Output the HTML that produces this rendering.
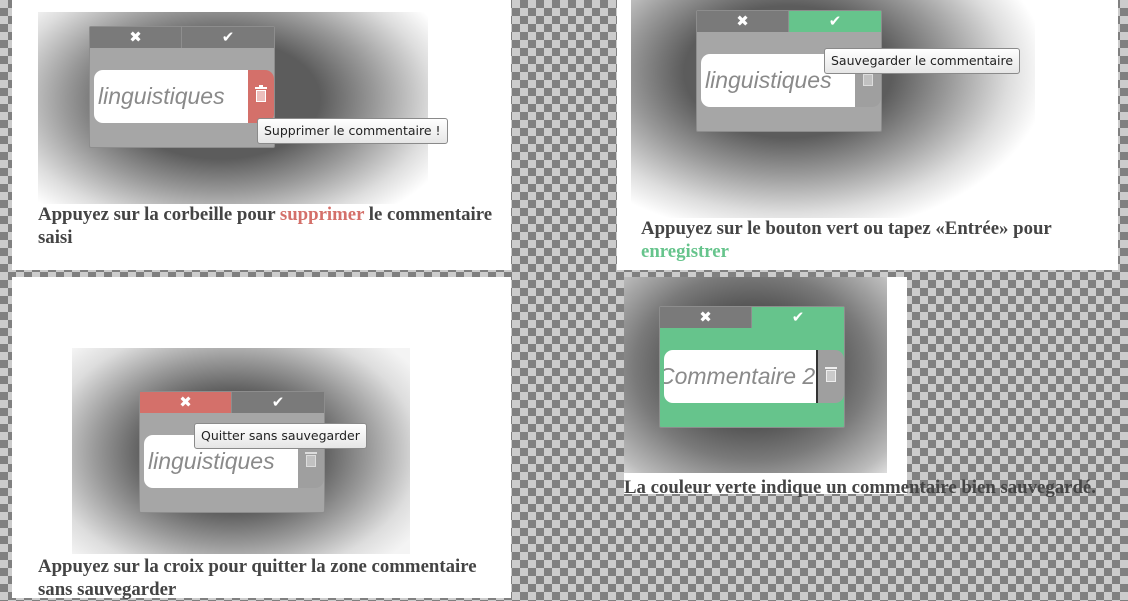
<!DOCTYPE html>
<html><head><meta charset="utf-8">
<style>
*{margin:0;padding:0;box-sizing:border-box}
body{width:1128px;height:598px;overflow:hidden;position:relative;
background-color:#cccccc;
background-image:linear-gradient(45deg,#808080 25%,transparent 25%,transparent 75%,#808080 75%),linear-gradient(45deg,#808080 25%,transparent 25%,transparent 75%,#808080 75%);
background-size:16px 16px;background-position:0 0,8px 8px;
font-family:"Liberation Serif",serif}
.a{position:absolute}
.w{background:#fff}
.img{position:absolute}
.pop{position:absolute;width:186px;height:122px;background:#a6a6a6;border:1px solid #8d8d8d;border-radius:2px}
.hd{position:absolute;top:0;height:21px;width:50%;background:#7a7a7a;color:#fff;font-size:15px;text-align:center;line-height:21px;font-family:"DejaVu Sans",sans-serif;font-weight:bold}
.hd.l{left:0;border-right:1px solid #8e8e8e}.hd.r{right:0}
.inp{position:absolute;left:4px;top:43px;width:154px;height:53px;background:#fff;border-radius:9px 0 0 9px;font-family:"Liberation Sans",sans-serif;font-style:italic;color:#8a8a8a;font-size:23px;line-height:53px;padding-left:4px;overflow:hidden;white-space:nowrap}
.tr{position:absolute;left:158px;top:43px;width:26px;height:53px;border-radius:0 9px 9px 0;background:#9f9f9f}
.tr svg{position:absolute;left:6px;top:14px}
.tip{position:absolute;height:26px;background:linear-gradient(#fff,#e6e6e6);border:1px solid #8a8a8a;border-radius:3px;font-family:"DejaVu Sans","Liberation Sans",sans-serif;font-size:12.5px;color:#222;line-height:24px;padding:0 6px;white-space:nowrap}
.cap{position:absolute;font-weight:bold;font-size:18.8px;color:#444;line-height:23px}
</style></head><body>

<!-- panel 1 -->
<div class="a w" style="left:12px;top:0;width:499px;height:270px"></div>
<div class="img" style="left:38px;top:12px;width:390px;height:192px;background:radial-gradient(ellipse 250px 150px at 182px 87px,#5c5c5c 40%,#999 62%,#ddd 85%,#fff 100%)"></div>
<div class="pop" style="left:89px;top:26px">
 <div class="hd l">✖</div><div class="hd r">✔</div>
 <div class="inp">linguistiques</div>
 <div class="tr" style="background:#d4706a"><svg width="14" height="20" viewBox="0 0 14 20"><rect x="1" y="3" width="12" height="2" fill="#fff"/><rect x="5" y="1" width="4" height="2" fill="#fff"/><rect x="2" y="6" width="10" height="12" fill="#fff"/><path d="M4 7v10M6 7v10M8 7v10M10 7v10" stroke="#d4706a" stroke-width="0.9"/></svg></div>
</div>
<div class="tip" style="left:257px;top:118px">Supprimer le commentaire !</div>
<div class="cap" style="left:38px;top:203px;width:460px">Appuyez sur la corbeille pour <span style="color:#d4706a">supprimer</span> le commentaire saisi</div>

<!-- panel 2 -->
<div class="a w" style="left:617px;top:0;width:501px;height:270px"></div>
<div class="img" style="left:631px;top:0;width:404px;height:218px;background:radial-gradient(ellipse 260px 165px at 157px 72px,#5c5c5c 40%,#999 62%,#ddd 85%,#fff 100%)"></div>
<div class="pop" style="left:696px;top:10px">
 <div class="hd l">✖</div><div class="hd r" style="background:#66c48c">✔</div>
 <div class="inp">linguistiques</div>
 <div class="tr"><svg width="14" height="20" viewBox="0 0 14 20"><rect x="1" y="3" width="12" height="2" fill="#ddd"/><rect x="2" y="6" width="10" height="12" fill="#ddd"/><path d="M4 7v10M6 7v10M8 7v10M10 7v10" stroke="#9f9f9f" stroke-width="0.9"/></svg></div>
</div>
<div class="tip" style="left:824px;top:48px">Sauvegarder le commentaire</div>
<div class="cap" style="left:641px;top:217px;width:440px">Appuyez sur le bouton vert ou tapez «Entrée» pour <span style="color:#66c48c">enregistrer</span></div>

<!-- panel 3 -->
<div class="a w" style="left:12px;top:277px;width:499px;height:321px"></div>
<div class="img" style="left:72px;top:348px;width:338px;height:206px;background:radial-gradient(ellipse 220px 150px at 160px 104px,#5c5c5c 40%,#999 62%,#ddd 85%,#f4f4f4 100%)"></div>
<div class="pop" style="left:139px;top:391px">
 <div class="hd l" style="background:#d4706a">✖</div><div class="hd r">✔</div>
 <div class="inp">linguistiques</div>
 <div class="tr"><svg width="14" height="20" viewBox="0 0 14 20"><rect x="1" y="3" width="12" height="2" fill="#ddd"/><rect x="2" y="6" width="10" height="12" fill="#ddd"/><path d="M4 7v10M6 7v10M8 7v10M10 7v10" stroke="#9f9f9f" stroke-width="0.9"/></svg></div>
</div>
<div class="tip" style="left:194px;top:423px">Quitter sans sauvegarder</div>
<div class="cap" style="left:38px;top:555px;width:455px">Appuyez sur la croix pour quitter la zone commentaire sans sauvegarder</div>

<!-- panel 4 -->
<div class="a w" style="left:624px;top:277px;width:283px;height:217px"></div>
<div class="img" style="left:624px;top:277px;width:263px;height:196px;background:radial-gradient(ellipse 190px 150px at 128px 90px,#555 40%,#7a7a7a 62%,#bbb 90%,#ddd 100%)"></div>
<div class="pop" style="left:659px;top:306px;background:#66c48c">
 <div class="hd l">✖</div><div class="hd r" style="background:#66c48c">✔</div>
 <div class="inp" style="padding-left:0;text-indent:-6px;border-right:2px solid #333">Commentaire 2</div>
 <div class="tr"><svg width="14" height="20" viewBox="0 0 14 20"><rect x="1" y="3" width="12" height="2" fill="#eee"/><rect x="2" y="6" width="10" height="12" fill="#eee"/><path d="M4 7v10M6 7v10M8 7v10M10 7v10" stroke="#9f9f9f" stroke-width="0.9"/></svg></div>
</div>
<div class="cap" style="left:624px;top:476px;white-space:nowrap">La couleur verte indique un commentaire bien sauvegardé.</div>
</body></html>
